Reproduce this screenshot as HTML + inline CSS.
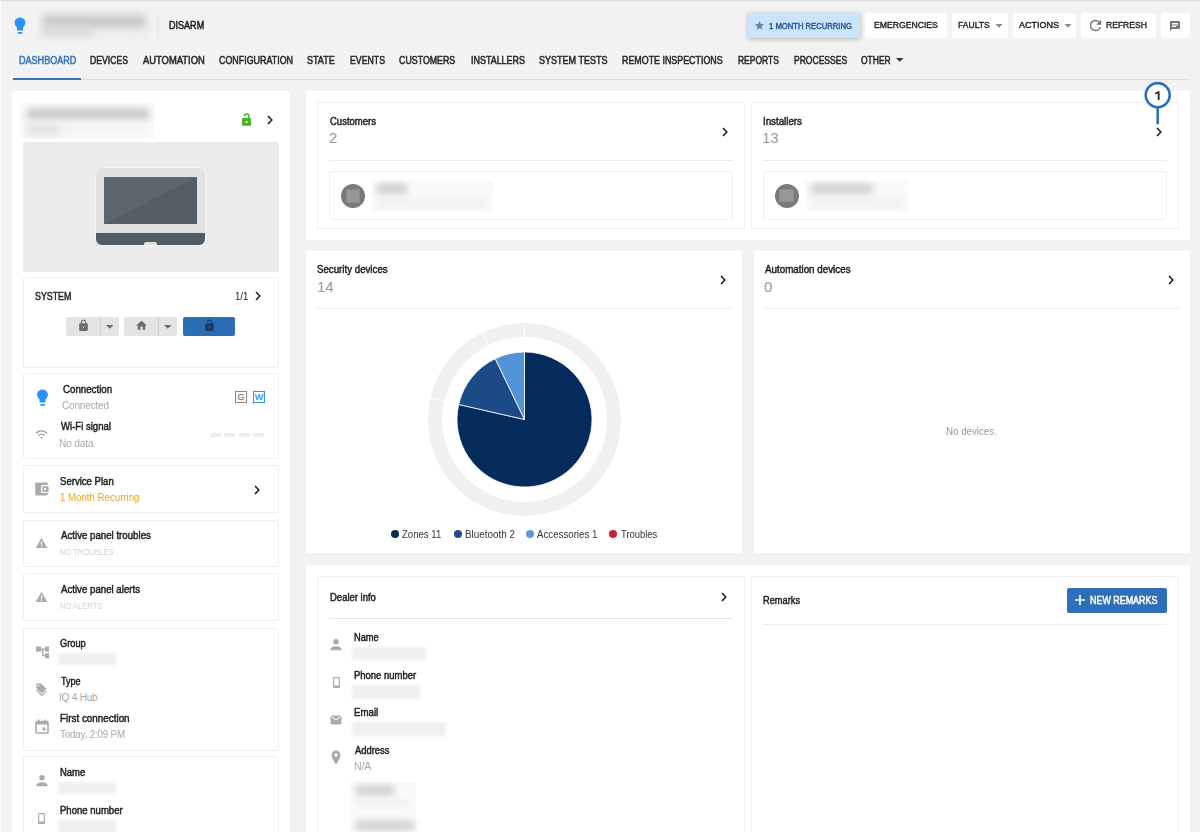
<!DOCTYPE html>
<html><head><meta charset="utf-8">
<style>
*{box-sizing:border-box;margin:0;padding:0}
html,body{width:1200px;height:832px;overflow:hidden;background:#f2f2f2;font-family:"Liberation Sans",sans-serif;color:#333;position:relative}
.a{position:absolute}
.t{position:absolute;line-height:1;white-space:nowrap;font-size:10px;transform-origin:0 0}
.b{-webkit-text-stroke:0.5px currentColor}
.card{position:absolute;background:#fff;border-radius:2px}
.ic{position:absolute;border:1px solid #efefef;border-radius:2px;background:#fff}
.btn{position:absolute;top:13px;height:25px;background:#fff;border-radius:2px}
.nav{top:56px;color:#262626;-webkit-text-stroke:0.5px currentColor}
.lbl{color:#1e1e1e;-webkit-text-stroke:0.45px currentColor}
.sub{color:#a8a8a8;letter-spacing:-0.2px}
.blur{position:absolute;filter:blur(2.5px)}
svg{position:absolute;overflow:visible}
</style></head><body>
<!-- top shadow/border -->
<div class="a" style="left:0;top:0;width:1200px;height:1px;background:#dcdcdc"></div>
<div class="a" style="left:0;top:1px;width:1200px;height:1px;background:#ebebeb"></div>
<div class="a" style="left:0;top:0;width:1px;height:832px;background:#fbfbfb"></div>

<!-- header -->
<svg style="left:14px;top:17px" width="12" height="17" viewBox="0 0 12 17">
  <path d="M6 0.5C2.9 0.5 0.6 2.9 0.6 5.8c0 1.9 1 3.5 2.4 4.5V13.5h6V10.3c1.4-1 2.4-2.6 2.4-4.5C11.4 2.9 9.1 0.5 6 0.5z" fill="#2890ff"/>
  <rect x="3.8" y="15" width="4.6" height="1.7" rx="0.5" fill="#2890ff"/>
</svg>
<div class="a" style="left:37px;top:10px;width:113px;height:29px;background:#efefef"></div>
<div class="blur" style="left:42px;top:15px;width:104px;height:13px;background:#c9c9c9;border-radius:6px;filter:blur(3.5px)"></div>
<div class="blur" style="left:42px;top:27px;width:50px;height:9px;background:#d9d9d9;border-radius:4px;filter:blur(3.5px)"></div>
<div class="a" style="left:157px;top:13px;width:1px;height:25px;background:#e7e7e7"></div>
<div class="t b" style="left:169.44px;top:21px;color:#1e1e1e;transform:scaleX(0.905)">DISARM</div>

<div class="btn" style="left:748px;width:112px;background:#cce4fb;box-shadow:0 1px 4px rgba(0,0,0,0.28)"></div>
<div class="btn" style="left:865px;width:82px"></div>
<div class="btn" style="left:952px;width:56px"></div>
<div class="btn" style="left:1013px;width:63px"></div>
<div class="btn" style="left:1081px;width:75px"></div>
<div class="btn" style="left:1161px;width:29px"></div>
<svg style="left:754.4px;top:20.4px" width="11" height="11" viewBox="0 0 24 24"><path d="M12 17.27L18.18 21l-1.64-7.03L22 9.24l-7.19-.61L12 2 9.19 8.63 2 9.24l5.46 4.73L5.82 21z" fill="#5b87b3"/></svg>
<div class="t" style="left:769.00px;top:22px;font-size:8.5px;color:#24599a;-webkit-text-stroke:0.45px currentColor;transform:scaleX(0.900)">1 MONTH RECURRING</div>
<div class="t b" style="left:874.35px;top:20px;font-size:9.5px;-webkit-text-stroke:0.4px currentColor;color:#222;transform:scaleX(0.910)">EMERGENCIES</div>
<div class="t b" style="left:957.70px;top:20px;font-size:9.5px;-webkit-text-stroke:0.4px currentColor;color:#222;transform:scaleX(0.900)">FAULTS</div>
<svg style="left:995px;top:24px" width="8" height="4" viewBox="0 0 8 4"><path d="M0.5 0h7L4 3.8z" fill="#8a8a8a"/></svg>
<div class="t b" style="left:1018.73px;top:20px;font-size:9.5px;-webkit-text-stroke:0.4px currentColor;color:#222;transform:scaleX(0.944)">ACTIONS</div>
<svg style="left:1064px;top:24px" width="8" height="4" viewBox="0 0 8 4"><path d="M0.5 0h7L4 3.8z" fill="#8a8a8a"/></svg>
<svg style="left:1087px;top:16.7px" width="17" height="17" viewBox="0 0 24 24"><path d="M17.65 6.35A7.958 7.958 0 0 0 12 4c-4.42 0-7.99 3.58-7.99 8s3.57 8 7.99 8c3.73 0 6.84-2.55 7.73-6h-2.08A5.99 5.99 0 0 1 12 18c-3.31 0-6-2.69-6-6s2.69-6 6-6c1.66 0 3.14.69 4.22 1.78L13 11h7V4l-2.35 2.35z" fill="#757575"/></svg>
<div class="t b" style="left:1106.42px;top:20px;font-size:9.5px;-webkit-text-stroke:0.4px currentColor;color:#222;transform:scaleX(0.900)">REFRESH</div>
<svg style="left:1169px;top:20px" width="12" height="12" viewBox="0 0 24 24"><path d="M20 2H4c-1.1 0-2 .9-2 2v18l4-4h14c1.1 0 2-.9 2-2V4c0-1.1-.9-2-2-2zM6 9h12v2H6V9zm8 5H6v-2h8v2zm4-6H6V6h12v2z" fill="#777"/></svg>

<!-- nav -->
<div class="t nav" style="left:19.00px;color:#3573c0;transform:scaleX(0.905)">DASHBOARD</div>
<div class="t nav" style="left:90.00px;transform:scaleX(0.864)">DEVICES</div>
<div class="t nav" style="left:142.79px;transform:scaleX(0.939)">AUTOMATION</div>
<div class="t nav" style="left:218.67px;transform:scaleX(0.890)">CONFIGURATION</div>
<div class="t nav" style="left:307.44px;transform:scaleX(0.903)">STATE</div>
<div class="t nav" style="left:350.00px;transform:scaleX(0.875)">EVENTS</div>
<div class="t nav" style="left:399.43px;transform:scaleX(0.883)">CUSTOMERS</div>
<div class="t nav" style="left:470.54px;transform:scaleX(0.893)">INSTALLERS</div>
<div class="t nav" style="left:539.44px;transform:scaleX(0.901)">SYSTEM TESTS</div>
<div class="t nav" style="left:622.44px;transform:scaleX(0.888)">REMOTE INSPECTIONS</div>
<div class="t nav" style="left:738.00px;transform:scaleX(0.847)">REPORTS</div>
<div class="t nav" style="left:794.19px;transform:scaleX(0.853)">PROCESSES</div>
<div class="t nav" style="left:861.42px;transform:scaleX(0.847)">OTHER</div>
<svg style="left:896px;top:58px" width="8" height="4" viewBox="0 0 8 4"><path d="M0 0h7.5L3.75 3.8z" fill="#333"/></svg>
<div class="a" style="left:13px;top:79px;width:1177px;height:1px;background:#dedede"></div>
<div class="a" style="left:13px;top:78.4px;width:68px;height:1.6px;background:#3573c0"></div>

<!-- left panel -->
<div class="card" style="left:12px;top:91px;width:278px;height:760px"></div>


<!-- left panel content -->
<div class="a" style="left:20px;top:103px;width:135px;height:36px;background:#fafafa"></div>
<div class="blur" style="left:26px;top:108px;width:124px;height:12px;background:#cbcbcb;border-radius:5px;filter:blur(3.5px)"></div>
<div class="blur" style="left:26px;top:124px;width:120px;height:10px;background:#f3f3f3;border-radius:4px;filter:blur(3px)"></div>
<div class="blur" style="left:26px;top:124px;width:34px;height:11px;background:#e2e2e2;border-radius:4px;filter:blur(3.5px)"></div>
<svg style="left:241px;top:113px" width="11" height="14" viewBox="0 0 11 14"><path d="M3.3 3.6V3.3A2.3 2.3 0 0 1 7.9 3.3V5.5" stroke="#44b526" stroke-width="1.5" fill="none"/><rect x="1" y="5" width="9" height="7.8" rx="1" fill="#44b526"/><rect x="4.6" y="8" width="1.9" height="1.9" fill="#fff"/></svg>
<svg style="left:266px;top:115px" width="8" height="10" viewBox="0 0 8 10"><path d="M2 1l3.8 4L2 9" stroke="#222" stroke-width="1.6" fill="none"/></svg>

<div class="a" style="left:23px;top:142px;width:256px;height:130px;background:#ebebeb;border-radius:2px"></div>
<div class="a" style="left:95px;top:167px;width:111px;height:79px;background:#e2e2e2;border-radius:7px;border:1px solid #f4f4f4;overflow:hidden">
  <div class="a" style="left:8px;top:9px;width:93px;height:47px;background:linear-gradient(to bottom right,#5c676d 50%,#535e65 50%)"></div>
  <div class="a" style="left:-1px;top:65px;width:111px;height:14px;background:#525c63"></div>
  <div class="a" style="left:48px;top:74px;width:13px;height:5px;background:#e0e0e0;border-radius:2px 2px 0 0"></div>
</div>

<!-- SYSTEM -->
<div class="ic" style="left:23px;top:277px;width:256px;height:91px"></div>
<div class="t lbl" style="left:35.34px;top:292px;color:#222;transform:scaleX(0.883)">SYSTEM</div>
<div class="t" style="left:235.47px;top:292px;color:#222;transform:scaleX(0.964)">1/1</div>
<svg style="left:254px;top:291px" width="8" height="10" viewBox="0 0 8 10"><path d="M2 1l3.8 4L2 9" stroke="#222" stroke-width="1.6" fill="none"/></svg>
<div class="a" style="left:66px;top:317px;width:53px;height:19px;background:#e4e4e4;border-radius:2px"></div>
<div class="a" style="left:100px;top:317px;width:1px;height:19px;background:#d2d2d2"></div>
<div class="a" style="left:124px;top:317px;width:53px;height:19px;background:#e4e4e4;border-radius:2px"></div>
<div class="a" style="left:158px;top:317px;width:1px;height:19px;background:#d2d2d2"></div>
<div class="a" style="left:183px;top:317px;width:52px;height:19px;background:#2d6db5;border-radius:2px"></div>
<svg style="left:77px;top:319px" width="13" height="13" viewBox="0 0 24 24"><path d="M18 8h-1V6c0-2.76-2.24-5-5-5S7 3.24 7 6v2H6c-1.1 0-2 .9-2 2v10c0 1.1.9 2 2 2h12c1.1 0 2-.9 2-2V10c0-1.1-.9-2-2-2zM9 6c0-1.66 1.34-3 3-3s3 1.34 3 3v2H9V6z" fill="#6b6b6b"/><rect x="10.8" y="13.8" width="2.4" height="2.4" fill="#e4e4e4"/></svg>
<svg style="left:106px;top:325px" width="8" height="4" viewBox="0 0 8 4"><path d="M0 0h7.5L3.75 3.8z" fill="#6b6b6b"/></svg>
<svg style="left:135px;top:319px" width="13" height="13" viewBox="0 0 24 24"><path d="M10 20v-6h4v6h5v-8h3L12 3 2 12h3v8z" fill="#6b6b6b"/></svg>
<svg style="left:164px;top:325px" width="8" height="4" viewBox="0 0 8 4"><path d="M0 0h7.5L3.75 3.8z" fill="#6b6b6b"/></svg>
<svg style="left:203px;top:319px" width="13" height="13" viewBox="0 0 24 24"><path d="M18 8h-1V6c0-2.76-2.24-5-5-5S7 3.24 7 6h2c0-1.66 1.34-3 3-3s3 1.34 3 3v2H6c-1.1 0-2 .9-2 2v10c0 1.1.9 2 2 2h12c1.1 0 2-.9 2-2V10c0-1.1-.9-2-2-2z" fill="#1b3c66"/><rect x="11" y="13" width="2" height="3" fill="#2d6db5"/></svg>

<!-- Connection -->
<div class="ic" style="left:23px;top:373px;width:256px;height:86px"></div>
<svg style="left:36px;top:389px" width="13" height="17" viewBox="0 0 12 17"><path d="M6 0.5C2.9 0.5 0.6 2.9 0.6 5.8c0 1.9 1 3.5 2.4 4.5V13.5h6V10.3c1.4-1 2.4-2.6 2.4-4.5C11.4 2.9 9.1 0.5 6 0.5z" fill="#2890ff"/><rect x="3.8" y="15" width="4.6" height="1.7" rx="0.5" fill="#2890ff"/></svg>
<div class="t lbl" style="left:63.05px;top:385px;transform:scaleX(0.971)">Connection</div>
<div class="t sub" style="left:62.07px;top:401px;transform:scaleX(1.007)">Connected</div>
<div class="a" style="left:235px;top:391px;width:12px;height:12px;border:1px solid #8a8a8a;font-size:9px;line-height:10px;text-align:center;color:#777;-webkit-text-stroke:0.25px currentColor">G</div>
<div class="a" style="left:253px;top:391px;width:12px;height:12px;border:1px solid #2890ff;font-size:9px;line-height:10px;text-align:center;color:#2890ff;-webkit-text-stroke:0.25px currentColor">W</div>
<svg style="left:35px;top:429px" width="13" height="11" viewBox="0 0 13 11"><path d="M1 4.2C4.3 1.2 8.7 1.2 12 4.2" stroke="#9a9a9a" stroke-width="1.4" fill="none"/><path d="M3.2 6.6C5.3 4.7 7.7 4.7 9.8 6.6" stroke="#9a9a9a" stroke-width="1.4" fill="none"/><path d="M5.3 8.4L6.5 10 7.7 8.4C7 7.8 6 7.8 5.3 8.4z" fill="#9a9a9a"/></svg>
<div class="t lbl" style="left:60.85px;top:422px;transform:scaleX(0.955)">Wi-Fi signal</div>
<div class="t sub" style="left:58.91px;top:439px;transform:scaleX(1.023)">No data</div>
<div class="a" style="left:210px;top:433px;width:11px;height:4px;background:#ededed"></div>
<div class="a" style="left:224px;top:433px;width:11px;height:4px;background:#ededed"></div>
<div class="a" style="left:239px;top:433px;width:11px;height:4px;background:#ededed"></div>
<div class="a" style="left:253px;top:433px;width:11px;height:4px;background:#ededed"></div>

<!-- Service plan -->
<div class="ic" style="left:23px;top:465px;width:256px;height:48px"></div>
<svg style="left:34px;top:481px" width="16" height="16" viewBox="0 0 16 16"><path d="M2.5 1.5h10c.8 0 1.3.5 1.3 1.2V4H8.5C7.5 4 7 4.6 7 5.5v5C7 11.4 7.5 12 8.5 12h5.3v1.3c0 .7-.5 1.2-1.3 1.2h-10c-.8 0-1.3-.5-1.3-1.2V2.7c0-.7.5-1.2 1.3-1.2z" fill="#ababab"/><path d="M8.3 5.2h6.3v5.6H8.3z" fill="#ababab"/><rect x="10" y="7" width="2" height="2" fill="#fff"/></svg>
<div class="t lbl" style="left:60.00px;top:477px;transform:scaleX(0.957)">Service Plan</div>
<div class="t" style="left:60.00px;top:493px;color:#e3a81c;transform:scaleX(0.966)">1 Month Recurring</div>
<svg style="left:253px;top:485px" width="8" height="10" viewBox="0 0 8 10"><path d="M2 1l3.8 4L2 9" stroke="#222" stroke-width="1.6" fill="none"/></svg>

<!-- troubles -->
<div class="ic" style="left:23px;top:520px;width:256px;height:47px"></div>
<svg style="left:35px;top:537px" width="13" height="12" viewBox="0 0 13 12"><path d="M6.5 0.8L12.3 11H0.7z" fill="#ababab"/><rect x="5.9" y="4.3" width="1.2" height="3.6" fill="#fff"/><rect x="5.9" y="8.7" width="1.2" height="1.2" fill="#fff"/></svg>
<div class="t lbl" style="left:60.91px;top:531px;transform:scaleX(0.968)">Active panel troubles</div>
<div class="t" style="left:60.00px;top:548px;font-size:8.5px;color:#d2d2d2;transform:scaleX(0.885)">NO TROUBLES</div>

<!-- alerts -->
<div class="ic" style="left:23px;top:573px;width:256px;height:48px"></div>
<svg style="left:35px;top:591px" width="13" height="12" viewBox="0 0 13 12"><path d="M6.5 0.8L12.3 11H0.7z" fill="#ababab"/><rect x="5.9" y="4.3" width="1.2" height="3.6" fill="#fff"/><rect x="5.9" y="8.7" width="1.2" height="1.2" fill="#fff"/></svg>
<div class="t lbl" style="left:60.91px;top:585px;transform:scaleX(0.967)">Active panel alerts</div>
<div class="t" style="left:60.00px;top:602px;font-size:8.5px;color:#d2d2d2;transform:scaleX(0.891)">NO ALERTS</div>

<!-- group/type/first -->
<div class="ic" style="left:23px;top:628px;width:256px;height:123px"></div>
<svg style="left:36px;top:646px" width="13" height="13" viewBox="0 0 13 13"><rect x="0" y="0.6" width="5.4" height="5" fill="#ababab"/><rect x="9" y="0.6" width="4" height="5" fill="#ababab"/><rect x="9" y="7.3" width="4" height="5" fill="#ababab"/><rect x="5.4" y="2.4" width="3.6" height="1.4" fill="#ababab"/><rect x="6" y="3" width="1.5" height="7" fill="#ababab"/><rect x="6" y="8.8" width="3" height="1.4" fill="#ababab"/></svg>
<div class="t lbl" style="left:60.00px;top:639px;transform:scaleX(0.925)">Group</div>
<div class="blur" style="left:58px;top:653px;width:58px;height:12px;background:#efefef;filter:blur(1.5px)"></div>
<svg style="left:35px;top:682px" width="13" height="14" viewBox="0 0 13 14"><path d="M1 1.5h5.2l5.3 5.3-4.7 4.7L1.5 6.2z" fill="#ababab"/><circle cx="3.3" cy="3.6" r="0.9" fill="#fff"/><path d="M1.5 8l5.3 5.3 4.7-4.7" stroke="#ababab" stroke-width="1.2" fill="none"/></svg>
<div class="t lbl" style="left:60.80px;top:677px;transform:scaleX(0.902)">Type</div>
<div class="t sub" style="left:59.00px;top:693px;transform:scaleX(1.000)">IQ 4 Hub</div>
<svg style="left:35px;top:719px" width="14" height="15" viewBox="0 0 14 15"><rect x="1" y="2.5" width="12" height="11.5" rx="1" stroke="#ababab" stroke-width="1.6" fill="none"/><rect x="1" y="2.5" width="12" height="3" fill="#ababab"/><rect x="3" y="0.5" width="1.4" height="3" fill="#ababab"/><rect x="9.6" y="0.5" width="1.4" height="3" fill="#ababab"/><rect x="7.5" y="8.5" width="3" height="3" fill="#ababab"/></svg>
<div class="t lbl" style="left:60.00px;top:714px;transform:scaleX(0.986)">First connection</div>
<div class="t sub" style="left:60.00px;top:730px;transform:scaleX(0.985)">Today, 2:09 PM</div>

<!-- name/phone -->
<div class="ic" style="left:23px;top:756px;width:256px;height:120px"></div>
<svg style="left:36px;top:775px" width="12" height="12" viewBox="0 0 12 12"><circle cx="6" cy="2.8" r="2.7" fill="#ababab"/><path d="M0.3 11.3C0.3 8.3 3 7.2 6 7.2s5.7 1.1 5.7 4.1z" fill="#ababab"/></svg>
<div class="t lbl" style="left:60.00px;top:768px;transform:scaleX(0.944)">Name</div>
<div class="blur" style="left:58px;top:782px;width:58px;height:12px;background:#efefef;filter:blur(1.5px)"></div>
<svg style="left:38px;top:813px" width="7" height="11" viewBox="0 0 7 11"><rect x="0.6" y="0.6" width="5.8" height="9.8" rx="0.8" stroke="#ababab" stroke-width="1.2" fill="none"/><rect x="0.6" y="8.6" width="5.8" height="1.8" fill="#ababab"/></svg>
<div class="t lbl" style="left:60.00px;top:806px;transform:scaleX(0.955)">Phone number</div>
<div class="blur" style="left:58px;top:820px;width:58px;height:14px;background:#efefef;filter:blur(1.5px)"></div>

<!-- main cards -->
<div class="card" style="left:306px;top:91px;width:884px;height:149px"></div>
<div class="ic" style="left:317px;top:102px;width:428px;height:127px"></div>
<div class="ic" style="left:751px;top:102px;width:428px;height:127px"></div>

<div class="card" style="left:306px;top:251px;width:436px;height:302px"></div>
<div class="card" style="left:754px;top:251px;width:436px;height:302px"></div>

<div class="card" style="left:306px;top:565px;width:884px;height:300px"></div>
<div class="ic" style="left:317px;top:576px;width:428px;height:300px"></div>
<div class="ic" style="left:751px;top:576px;width:428px;height:300px"></div>


<!-- customers -->
<div class="t lbl" style="left:330.03px;top:117px;transform:scaleX(0.951)">Customers</div>
<div class="t" style="left:329px;top:130px;font-size:15px;color:#9a9a9a">2</div>
<svg style="left:721px;top:127px" width="8" height="10" viewBox="0 0 8 10"><path d="M2 1l3.8 4L2 9" stroke="#222" stroke-width="1.6" fill="none"/></svg>
<div class="a" style="left:329px;top:160px;width:404px;height:1px;background:#ececec"></div>
<div class="ic" style="left:329px;top:171px;width:404px;height:49px"></div>
<div class="a" style="left:341px;top:184px;width:24px;height:24px;border-radius:50%;background:#7a7a7a"></div>
<div class="a" style="left:346px;top:189px;width:14px;height:14px;background:#979797;border:1px solid #8a8a8a;filter:blur(0.4px)"></div>
<div class="a" style="left:372px;top:181px;width:121px;height:30px;background:#fafafa"></div>
<div class="blur" style="left:376px;top:183px;width:32px;height:12px;background:#d2d2d2;border-radius:6px;filter:blur(3.5px)"></div>
<div class="blur" style="left:377px;top:198px;width:112px;height:10px;background:#f1f1f1;border-radius:4px;filter:blur(3px)"></div>

<!-- installers -->
<div class="t lbl" style="left:762.78px;top:117px;transform:scaleX(0.973)">Installers</div>
<div class="t" style="left:762px;top:130px;font-size:15px;color:#9a9a9a">13</div>
<svg style="left:1155px;top:127px" width="8" height="10" viewBox="0 0 8 10"><path d="M2 1l3.8 4L2 9" stroke="#222" stroke-width="1.6" fill="none"/></svg>
<div class="a" style="left:763px;top:160px;width:404px;height:1px;background:#ececec"></div>
<div class="ic" style="left:763px;top:171px;width:404px;height:49px"></div>
<div class="a" style="left:775px;top:184px;width:24px;height:24px;border-radius:50%;background:#7a7a7a"></div>
<div class="a" style="left:779px;top:189px;width:15px;height:13px;background:#979797;border:1px solid #8a8a8a;filter:blur(0.4px)"></div>
<div class="a" style="left:806px;top:181px;width:102px;height:30px;background:#fafafa"></div>
<div class="blur" style="left:810px;top:183px;width:64px;height:12px;background:#d4d4d4;border-radius:6px;filter:blur(3.5px)"></div>
<div class="blur" style="left:810px;top:198px;width:94px;height:10px;background:#f1f1f1;border-radius:4px;filter:blur(3px)"></div>

<!-- security devices -->
<div class="t lbl" style="left:317.47px;top:265px;transform:scaleX(0.970)">Security devices</div>
<div class="t" style="left:317px;top:279px;font-size:15px;color:#9a9a9a">14</div>
<svg style="left:719px;top:275px" width="8" height="10" viewBox="0 0 8 10"><path d="M2 1l3.8 4L2 9" stroke="#222" stroke-width="1.6" fill="none"/></svg>
<div class="a" style="left:317px;top:308px;width:414px;height:1px;background:#ececec"></div>
<svg style="left:0;top:0" width="1200" height="832" viewBox="0 0 1200 832">
<circle cx="524.5" cy="419.5" r="89.5" stroke="#f0f0f0" stroke-width="14" fill="none"/>
<path d="M524.50 338.00L524.50 322.00" stroke="#fff" stroke-width="1"/><path d="M445.04 401.36L429.44 397.80" stroke="#fff" stroke-width="1"/><path d="M489.14 346.07L482.20 331.66" stroke="#fff" stroke-width="1"/><path d="M524.50 419.50L524.50 352.00A67.5 67.5 0 1 1 458.69 404.48Z" fill="#052b5c" stroke="#fff" stroke-width="0.8"/><path d="M524.50 419.50L458.69 404.48A67.5 67.5 0 0 1 495.21 358.68Z" fill="#1c4a86" stroke="#fff" stroke-width="0.8"/><path d="M524.50 419.50L495.21 358.68A67.5 67.5 0 0 1 524.50 352.00Z" fill="#5393d8" stroke="#fff" stroke-width="0.8"/></svg>
<div class="a" style="left:391px;top:530px;width:8px;height:8px;border-radius:50%;background:#0b2a5b"></div>
<div class="t" style="left:402.00px;top:529px;font-size:10.5px;color:#333;transform:scaleX(0.913)">Zones 11</div>
<div class="a" style="left:454px;top:530px;width:8px;height:8px;border-radius:50%;background:#1e4a8a"></div>
<div class="t" style="left:464.51px;top:529px;font-size:10.5px;color:#333;transform:scaleX(0.939)">Bluetooth 2</div>
<div class="a" style="left:526px;top:530px;width:8px;height:8px;border-radius:50%;background:#5a9ad8"></div>
<div class="t" style="left:537.00px;top:529px;font-size:10.5px;color:#333;transform:scaleX(0.923)">Accessories 1</div>
<div class="a" style="left:609px;top:530px;width:8px;height:8px;border-radius:50%;background:#cc1f36"></div>
<div class="t" style="left:621.21px;top:529px;font-size:10.5px;color:#333;transform:scaleX(0.896)">Troubles</div>

<!-- automation -->
<div class="t lbl" style="left:765.34px;top:265px;transform:scaleX(0.980)">Automation devices</div>
<div class="t" style="left:764px;top:279px;font-size:15px;color:#9a9a9a">0</div>
<svg style="left:1167px;top:275px" width="8" height="10" viewBox="0 0 8 10"><path d="M2 1l3.8 4L2 9" stroke="#222" stroke-width="1.6" fill="none"/></svg>
<div class="a" style="left:765px;top:308px;width:414px;height:1px;background:#ececec"></div>
<div class="t" style="left:946.11px;top:427px;color:#999;transform:scaleX(0.973)">No devices.</div>

<!-- dealer info -->
<div class="t lbl" style="left:329.51px;top:593px;transform:scaleX(0.949)">Dealer info</div>
<svg style="left:720px;top:592px" width="8" height="10" viewBox="0 0 8 10"><path d="M2 1l3.8 4L2 9" stroke="#222" stroke-width="1.6" fill="none"/></svg>
<div class="a" style="left:329px;top:618px;width:404px;height:1px;background:#e8e8e8"></div>
<div class="t lbl" style="left:354.44px;top:633px;transform:scaleX(0.926)">Name</div>
<svg style="left:330px;top:639px" width="12" height="12" viewBox="0 0 12 12"><circle cx="6" cy="2.8" r="2.7" fill="#ababab"/><path d="M0.3 11.3C0.3 8.3 3 7.2 6 7.2s5.7 1.1 5.7 4.1z" fill="#ababab"/></svg>
<div class="t lbl" style="left:354.43px;top:671px;transform:scaleX(0.947)">Phone number</div>
<svg style="left:333px;top:677px" width="7" height="11" viewBox="0 0 7 11"><rect x="0.6" y="0.6" width="5.8" height="9.8" rx="0.8" stroke="#ababab" stroke-width="1.2" fill="none"/><rect x="0.6" y="8.6" width="5.8" height="1.8" fill="#ababab"/></svg>
<div class="t lbl" style="left:354.20px;top:708px;transform:scaleX(0.968)">Email</div>
<svg style="left:330px;top:715px" width="12" height="10" viewBox="0 0 12 10"><rect x="0.5" y="0.5" width="11" height="9" rx="1" fill="#ababab"/><path d="M1 1.5l5 3.3 5-3.3" stroke="#fff" stroke-width="1" fill="none"/></svg>
<div class="t lbl" style="left:355.07px;top:746px;transform:scaleX(0.937)">Address</div>
<svg style="left:331px;top:750px" width="10" height="15" viewBox="0 0 10 15"><path d="M5 0.5C2.5 0.5 0.5 2.5 0.5 5c0 3.4 4.5 9.5 4.5 9.5S9.5 8.4 9.5 5C9.5 2.5 7.5 0.5 5 0.5z" fill="#ababab"/><circle cx="5" cy="5" r="1.6" fill="#fff"/></svg>

<div class="blur" style="left:352px;top:647px;width:74px;height:13px;background:#f0f0f0;filter:blur(1.5px)"></div>
<div class="blur" style="left:352px;top:685px;width:68px;height:14px;background:#f0f0f0;filter:blur(1.5px)"></div>
<div class="blur" style="left:352px;top:722px;width:94px;height:14px;background:#f0f0f0;filter:blur(1.5px)"></div>
<div class="t sub" style="left:353.99px;top:762px;transform:scaleX(1.056)">N/A</div>
<div class="a" style="left:350px;top:782px;width:66px;height:50px;background:#fafafa"></div>
<div class="blur" style="left:355px;top:785px;width:40px;height:11px;background:#d4d4d4;border-radius:5px;filter:blur(3px)"></div>
<div class="blur" style="left:354px;top:800px;width:56px;height:6px;background:#f0f0f0;border-radius:4px;filter:blur(2.5px)"></div>
<div class="blur" style="left:355px;top:820px;width:60px;height:11px;background:#d4d4d4;border-radius:5px;filter:blur(3px)"></div>

<!-- remarks -->
<div class="t lbl" style="left:762.79px;top:596px;transform:scaleX(0.927)">Remarks</div>
<div class="a" style="left:1067px;top:588px;width:100px;height:25px;background:#2f6fba;border-radius:2px"></div>
<svg style="left:1074px;top:594px" width="12" height="12" viewBox="0 0 12 12"><path d="M6 1v10M1 6h10" stroke="#fff" stroke-width="1.6"/></svg>
<div class="t b" style="left:1090.00px;top:596px;color:#fff;transform:scaleX(0.892)">NEW REMARKS</div>
<div class="a" style="left:763px;top:624px;width:404px;height:1px;background:#eeeeee"></div>

<!-- annotation -->
<svg style="left:0;top:0" width="1200" height="832" viewBox="0 0 1200 832">
<circle cx="1157.7" cy="95.1" r="12" stroke="#2a6fbd" stroke-width="2.6" fill="#fff"/>
<path d="M1157.7 107.5V124.2" stroke="#2a6fbd" stroke-width="2.5"/>
</svg>
<svg style="left:1154px;top:91px" width="7" height="9" viewBox="0 0 7 9"><path d="M3.9 0.2H5.6V8.9H3.7V2.6L1 3.5V1.9z" fill="#2b2b2b"/></svg>

</body></html>
